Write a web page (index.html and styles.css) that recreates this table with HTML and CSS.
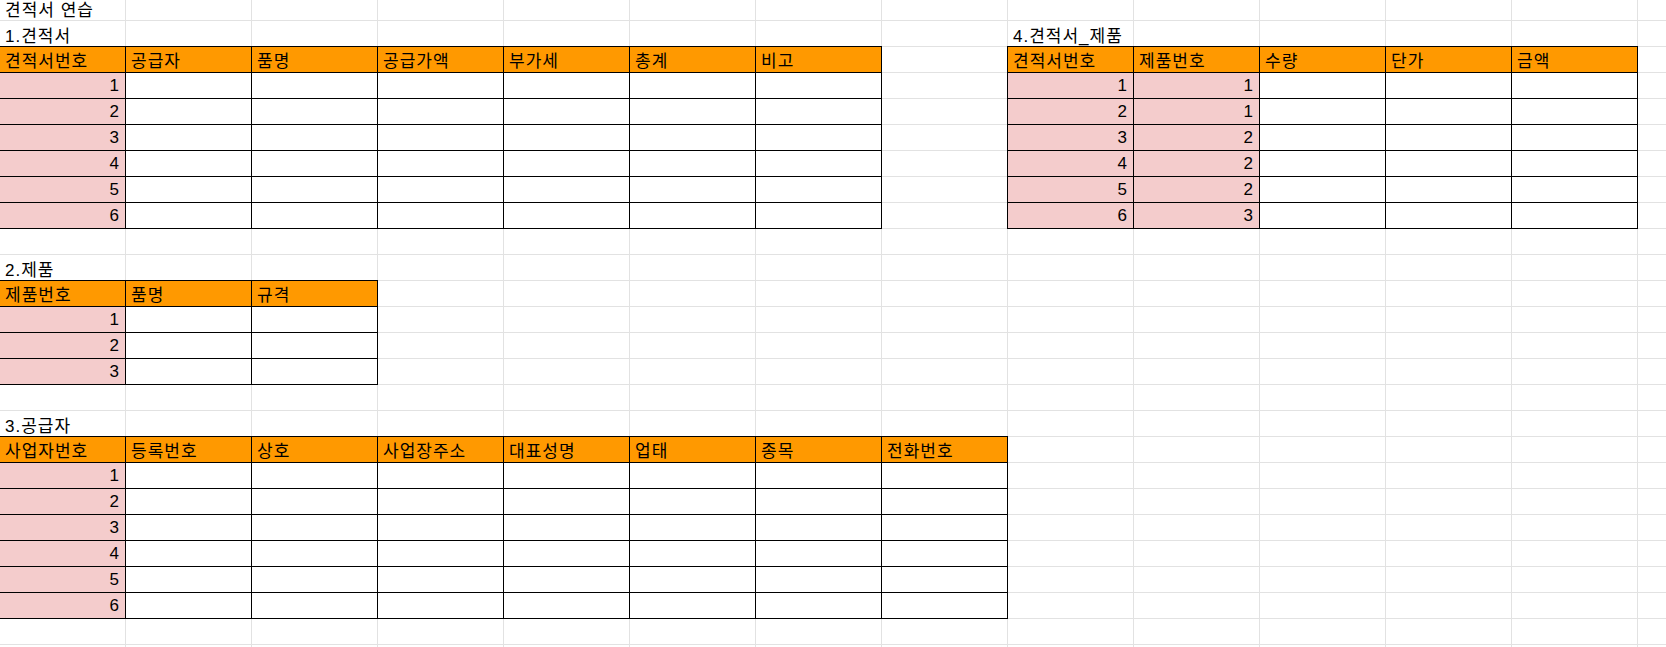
FILE: index.html
```html
<!DOCTYPE html>
<html lang="ko">
<head>
<meta charset="utf-8">
<title>견적서 연습</title>
<link rel="stylesheet" href="styles.css">
</head>
<body>
<div class="sheet">
  <div class="label r0 c0">견적서 연습</div>
  <div class="label r1 c0">1.견적서</div>
  <div class="label r1 c8">4.견적서_제품</div>

  <div class="tbl t1">
    <div class="cell h">견적서번호</div><div class="cell h">공급자</div><div class="cell h">품명</div><div class="cell h">공급가액</div><div class="cell h">부가세</div><div class="cell h">총계</div><div class="cell h">비고</div>
    <div class="cell k">1</div><div class="cell"></div><div class="cell"></div><div class="cell"></div><div class="cell"></div><div class="cell"></div><div class="cell"></div>
    <div class="cell k">2</div><div class="cell"></div><div class="cell"></div><div class="cell"></div><div class="cell"></div><div class="cell"></div><div class="cell"></div>
    <div class="cell k">3</div><div class="cell"></div><div class="cell"></div><div class="cell"></div><div class="cell"></div><div class="cell"></div><div class="cell"></div>
    <div class="cell k">4</div><div class="cell"></div><div class="cell"></div><div class="cell"></div><div class="cell"></div><div class="cell"></div><div class="cell"></div>
    <div class="cell k">5</div><div class="cell"></div><div class="cell"></div><div class="cell"></div><div class="cell"></div><div class="cell"></div><div class="cell"></div>
    <div class="cell k">6</div><div class="cell"></div><div class="cell"></div><div class="cell"></div><div class="cell"></div><div class="cell"></div><div class="cell"></div>
  </div>

  <div class="tbl t4">
    <div class="cell h">견적서번호</div><div class="cell h">제품번호</div><div class="cell h">수량</div><div class="cell h">단가</div><div class="cell h">금액</div>
    <div class="cell k">1</div><div class="cell k">1</div><div class="cell"></div><div class="cell"></div><div class="cell"></div>
    <div class="cell k">2</div><div class="cell k">1</div><div class="cell"></div><div class="cell"></div><div class="cell"></div>
    <div class="cell k">3</div><div class="cell k">2</div><div class="cell"></div><div class="cell"></div><div class="cell"></div>
    <div class="cell k">4</div><div class="cell k">2</div><div class="cell"></div><div class="cell"></div><div class="cell"></div>
    <div class="cell k">5</div><div class="cell k">2</div><div class="cell"></div><div class="cell"></div><div class="cell"></div>
    <div class="cell k">6</div><div class="cell k">3</div><div class="cell"></div><div class="cell"></div><div class="cell"></div>
  </div>

  <div class="label r10 c0">2.제품</div>
  <div class="tbl t2">
    <div class="cell h">제품번호</div><div class="cell h">품명</div><div class="cell h">규격</div>
    <div class="cell k">1</div><div class="cell"></div><div class="cell"></div>
    <div class="cell k">2</div><div class="cell"></div><div class="cell"></div>
    <div class="cell k">3</div><div class="cell"></div><div class="cell"></div>
  </div>

  <div class="label r16 c0">3.공급자</div>
  <div class="tbl t3">
    <div class="cell h">사업자번호</div><div class="cell h">등록번호</div><div class="cell h">상호</div><div class="cell h">사업장주소</div><div class="cell h">대표성명</div><div class="cell h">업태</div><div class="cell h">종목</div><div class="cell h">전화번호</div>
    <div class="cell k">1</div><div class="cell"></div><div class="cell"></div><div class="cell"></div><div class="cell"></div><div class="cell"></div><div class="cell"></div><div class="cell"></div>
    <div class="cell k">2</div><div class="cell"></div><div class="cell"></div><div class="cell"></div><div class="cell"></div><div class="cell"></div><div class="cell"></div><div class="cell"></div>
    <div class="cell k">3</div><div class="cell"></div><div class="cell"></div><div class="cell"></div><div class="cell"></div><div class="cell"></div><div class="cell"></div><div class="cell"></div>
    <div class="cell k">4</div><div class="cell"></div><div class="cell"></div><div class="cell"></div><div class="cell"></div><div class="cell"></div><div class="cell"></div><div class="cell"></div>
    <div class="cell k">5</div><div class="cell"></div><div class="cell"></div><div class="cell"></div><div class="cell"></div><div class="cell"></div><div class="cell"></div><div class="cell"></div>
    <div class="cell k">6</div><div class="cell"></div><div class="cell"></div><div class="cell"></div><div class="cell"></div><div class="cell"></div><div class="cell"></div><div class="cell"></div>
  </div>
</div>
</body>
</html>
```

FILE: styles.css
```css
html, body {
  margin: 0;
  padding: 0;
  background: #ffffff;
  overflow: hidden;
}

body {
  width: 1666px;
  height: 647px;
  font-family: "Liberation Sans", "Noto Sans CJK KR", sans-serif;
  font-size: 17px;
  letter-spacing: 1px;
  color: #000000;
}

.sheet {
  display: grid;
  grid-template-columns: repeat(13, 126px) 28px;
  grid-template-rows: repeat(25, 26px) 7px;
  width: 1666px;
  height: 652px;
  margin-top: -5px;
  overflow: hidden;
  background-image:
    repeating-linear-gradient(to right, transparent 0 125px, #e2e2e2 125px 126px),
    repeating-linear-gradient(to bottom, transparent 0 25px, #e2e2e2 25px 26px);
}

.label {
  display: flex;
  align-items: center;
  padding: 0 5px;
  white-space: nowrap;
  grid-column-end: span 3;
}

.r0 { grid-row: 1; }
.r1 { grid-row: 2; }
.r10 { grid-row: 11; }
.r16 { grid-row: 17; }
.c0 { grid-column-start: 1; }
.c8 { grid-column-start: 9; }

.tbl {
  display: grid;
  grid-auto-rows: 26px;
  margin: -1px 0 0 -1px;
  border-top: 1px solid #000;
  border-left: 1px solid #000;
}

.t1 {
  grid-column: 1 / span 7;
  grid-row: 3 / span 7;
  grid-template-columns: repeat(7, 126px);
}

.t4 {
  grid-column: 9 / span 5;
  grid-row: 3 / span 7;
  grid-template-columns: repeat(5, 126px);
}

.t2 {
  grid-column: 1 / span 3;
  grid-row: 12 / span 4;
  grid-template-columns: repeat(3, 126px);
}

.t3 {
  grid-column: 1 / span 8;
  grid-row: 18 / span 7;
  grid-template-columns: repeat(8, 126px);
}

.cell {
  box-sizing: border-box;
  display: flex;
  align-items: center;
  padding: 0 5px;
  border-right: 1px solid #000;
  border-bottom: 1px solid #000;
  background: #ffffff;
  white-space: nowrap;
  overflow: hidden;
}

.h {
  background: #ff9900;
}

.k {
  background: #f4cccc;
  justify-content: flex-end;
  letter-spacing: 0;
  padding-right: 6px;
}
```
